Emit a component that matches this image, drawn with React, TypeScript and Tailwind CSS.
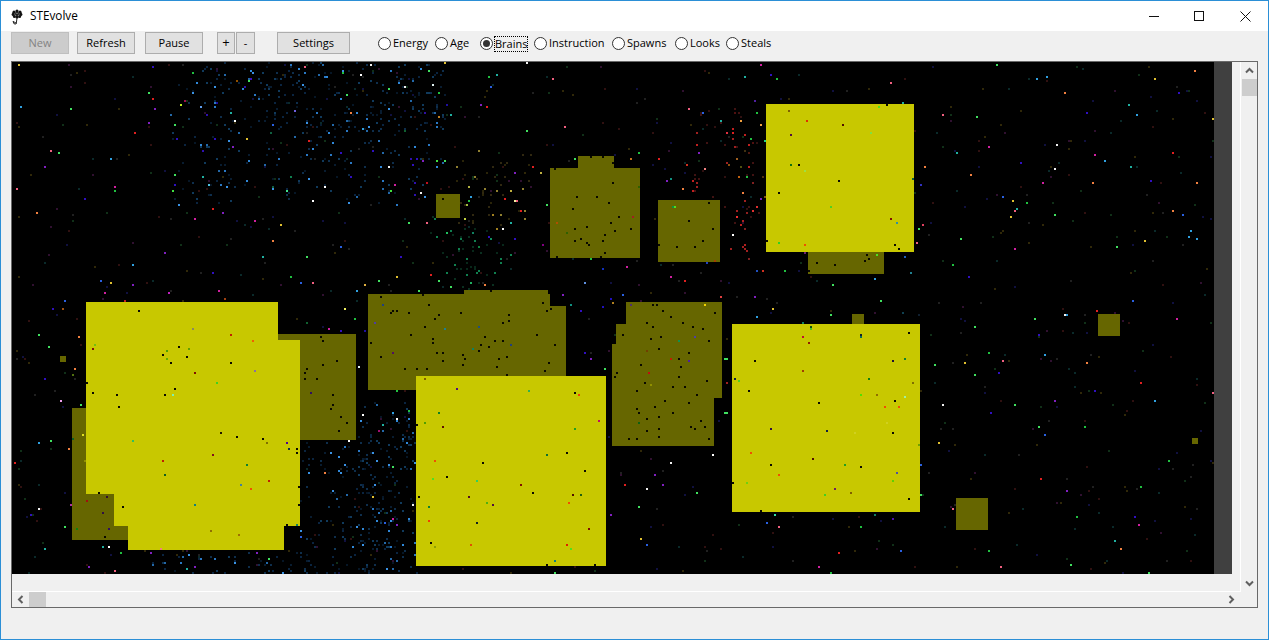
import React from "react";

type Dot = [number, number, string];

const g = (ox: number, oy: number, s: string): Dot[] =>
  s.trim().split(/\s+/).map((t) => {
    const [a, b, c] = t.split(",");
    const x = ox + (Number(a) - 3) / 3;
    const y = oy + (Number(b) - 3) / 3;
    return [Math.round(x / 2) * 2, Math.round(y / 2) * 2, c ? "#" + c : "#0a0a00"] as Dot;
  });

const listed: Dot[] = [
  ...g(60, 290, `237,63 357,171 309,195 381,201 333,219 513,219 81,279 99,309 171,315 315,315 345,297 177,351 483,429,201800 531,441 609,447 711,477 711,489 687,477,103040 117,609 141,621,301030 189,651 129,669,301040 147,717,301060 135,741 717,591 717,645 681,705
    783,141 789,153 831,213 789,225 741,237 735,249 735,267 771,267 819,315 753,309,301060 819,345 813,357 843,381 861,399 837,423
    99,177,801010 399,117,8a8a60 513,135,c02000 579,153,f06000 321,183,50a000 387,177,60a000 321,207,60b000 585,243,8a70a0 405,249,801000 471,279,40d020 339,315,80f0b0 219,453,30c060 309,513,c02000 459,495,801020 315,555,106020 561,525,108030 621,459,807000 681,459,500090 543,585,4080a0 627,573,c02000 573,597,f05000 405,645,108080 453,723,907000 537,735,a07000 81,633,a01010 51,717,108010 711,705,108060 105,165,70c010
    147,771,ffffff 195,33,c02020 135,9,d020a0 327,9,c020c0 855,57,f0f060 63,345,40e060 69,435,e0e020 33,645,b030a0 3,333,f0a0f0 495,27,a04010 9,57,a05010 39,255,507010 915,123,2010a0 741,99,106030 897,231,e0f0f0 867,453,ffffff 909,375,ffffff 303,777,f08080 75,513,909000 39,447,106020`),
  ...g(360, 280, `63,51 207,75 99,93 111,93 93,99 147,99 237,105 303,99 225,117 447,105 447,123 429,129 195,141 153,165 219,177 219,189 33,189 375,171 405,183 429,183 363,195 387,201 357,213 231,219 249,219 309,225 315,237 249,243 63,231 309,255 417,237 441,231 135,267 171,267 201,267 411,261 567,249 555,273 441,285 531,165 585,195 549,69 561,93 573,87 189,45 393,33
    69,75,204080 45,129,5040a0 255,147,208090 357,141,205080 339,207,108060 453,195,204080 99,219,501060
    879,75 891,75 909,93 933,111 1065,99 861,129 969,129 999,141 879,141 1029,147 789,165 873,177 903,171 1047,183 897,207 987,219 957,237 843,255 963,261 771,279 765,291 957,291 855,309 939,321 975,321 831,333 1041,303 1011,345 915,363 987,369 885,381 831,387 837,399 939,399 861,417 897,411 1023,423 993,441 1035,441 1005,447 897,447 861,453 897,471 807,477 831,477 1047,477
    813,75,503070 1035,75,f0d000 957,183,109050 1005,171,5040a0 861,213,704000 933,237,c02000 987,243,5020a0 867,279,c01010 873,315,909000 837,429,106010
    195,297,806000 291,327,501080 507,333,30b050 645,339 657,345,f04000 237,399,108020 195,429,50a000 249,441,601000 717,423,c01060 645,447,20a020 561,525,108030 621,519 171,435
    15,15,e0b040 57,3,40e060 177,33,40e060 273,21,40e060 333,9,20b060 675,9,6090e0 753,57,2010c0 729,81,2010c0 759,69,b08020 633,75,109080 1083,51,e04040 1095,237,40e060 1095,399,40e060 1101,309,a02020 1059,525,ffffff 15,153,2010a0 9,405,ffffff 111,417,ffffff 57,453,a01070`),
  ...g(725, 95, `192,48,806000 246,78,e03000 354,90,501000 198,120,501040 462,36,50e020 486,30 438,114,80e040 198,210,107010 222,210 240,228,a0e040 342,258 162,294 318,336,50d020 498,372,801000 516,384,3090a0 510,450 522,462 162,444,30d020 240,450,f05000 126,438 564,252,106040
    426,480 432,492 420,498 276,504 330,510 252,528 456,480,50e020 240,474,702070
    48,78,f0a040 108,90,f0a040 6,114,e03040 60,120,c02020 120,138,20d080 30,156,a02020 36,192,a06020 12,210,905010 42,246,c06010 84,264,802020 96,336,e03030 84,348,e03030 36,348,a02020 66,354,902020 36,366,f03030 54,378,b02020 60,402,802020 24,420,ffffff 60,450,b02020 54,456,a02020 18,462,a02020 66,468,a02020 72,492,802020 114,528,d03020 96,528,2050c0 90,18,5020a0 588,270,3030c0 594,390,e04060 540,486,2060c0 558,534,208090 48,216,505010 60,168,403010 72,174,501810 84,144,501010 120,306,805010 114,246,503010 60,318,a02020 30,54,501010`),
  ...g(725, 310, `90,153 30,207,102040 72,243 282,279 138,357,301040 306,363,102040 504,369 138,465 264,447,501000 408,471 24,519 108,603 552,567 552,69 504,153,201030 510,273 408,75,102030
    234,81,c01030 252,99,902000 258,57,50c020 258,51,105010 408,81,107050 540,147,108030 234,183,a04000 432,207,108010 42,213,50d020 564,219,807000 408,255,50e000 456,255,907000 540,261,a0f0a0 480,291,f05000 522,291,f05000 486,339,d0d020 390,369,d0d020 78,429,f05000 360,465,20a020 516,489,5050a0 162,495,f05000 66,519,70d010 504,513,60d000 330,537,702060 378,549,806000 300,555,40d020 582,405,70a000
    234,39,108060 318,15,40e060 150,615,30e0a0 450,615,108060 504,627,5010b0 3,147,40e060 3,219,a02020 3,309,40e060 534,9,104050 582,15,102030`),
  ...g(410, 440, `219,69 471,39 525,93 111,111 27,171 369,159 201,249,102020 63,309 411,375 555,375
    411,45,107030 75,63,f05000 69,117,50e020 201,123,30d060 333,135,801000 177,171,501020 489,165,501000 513,165,206010 231,189,50b010 249,195,501040 477,189,f05000 57,201,108030 57,243,f04000 537,267,801000 75,321,90a000 183,315,e05000 471,315,e02000 483,327,50e020 435,363,108080`),
  ...g(430, 150, `39,147 549,39 375,57 549,99 441,141 501,141 537,159 429,177 567,201 543,219 471,231 435,237 603,237 555,243 525,255 453,267 435,273 519,273 471,279 477,285 525,309 381,321 513,321 483,21 519,21 837,159 777,213 849,237 819,273 741,291 795,291 687,285
    381,219,b05000 411,249,306000 609,201,a02020 627,111,306000 735,171,50e020 729,171,109040 855,333,a04000 831,339,2040c0
    225,147,e02020 255,153,f0f0a0 219,237,ffffff 51,249,20c060 21,33,30e060 339,285,800080 687,27,e02020 771,45,d03020 825,57,f08080 723,87,109080 603,27,c07020 333,69,c0b040 117,111,b0b040 243,123,c0b040 105,207,c0d040 111,165,a0c040 189,195,a08020 201,237,a08020 183,267,109060 129,249,108060 147,291,108040 519,357,1030c0`),
  ...g(150, 62, `633,39,ffffff 849,69,e0f0f0 255,177,ffffff 525,375,ffffff 489,417,ffffff 9,111,e02020 93,129,c0f020 105,117,a01050 153,135,60a0f0 435,147,7060e0 303,51,4010c0 261,57,905000 285,75,3010b0 201,123,2010a0 171,159,3010b0 81,231,3010c0 195,231,3010c0 159,267,3010b0 69,387,40e040 177,369,50c0e0 411,387,40e090 423,345,108050 369,375,106040 363,213,106040 861,297,40e040 831,363,c01020 735,369,d020a0 723,387,40e040 795,363,3010b0 795,399,3010b0 603,345,3010c0 669,267,3010c0 783,291,3010b0 825,153,3010a0 891,129,2010a0 867,165,c08020 765,207,106030`),
];

let seed = 48271;
const rnd = () => {
  seed = (seed * 16807) % 2147483647;
  return seed / 2147483647;
};
const pick = (a: string[]) => a[Math.floor(rnd() * a.length)];

const cloud = (n: number, x0: number, x1: number, y0: number, y1: number, bright: string[], dim: string[], p: number): Dot[] => {
  const out: Dot[] = [];
  for (let i = 0; i < n; i++) {
    const x = x0 + rnd() * (x1 - x0);
    const y = y0 + rnd() * (y1 - y0);
    out.push([Math.round(x / 2) * 2, Math.round(y / 2) * 2, rnd() < p ? pick(bright) : pick(dim)]);
  }
  return out;
};

const blue = ["#2a78c4", "#3088d8", "#2368a8", "#3a92e4"];
const blueDim = ["#0a2440", "#081c30", "#0e2e4c", "#061626", "#103a5c"];
const colorful = ["#e02020", "#40e060", "#f0f0f0", "#3010c0", "#3010c0", "#d020a0", "#e0c030", "#20b0a0", "#f08040", "#8020c0", "#30a0e0", "#f06080", "#40e060", "#2a60e0", "#20c040"];
const colorDim = ["#301010", "#103018", "#101040", "#302808", "#301030", "#0a2a2a", "#202020"];

const noise: Dot[] = [
  ...cloud(430, 12, 1214, 62, 574, colorful, colorful, 1),
  ...cloud(900, 12, 1214, 62, 574, colorDim, colorDim, 1),
  ...cloud(300, 170, 445, 62, 205, blue, blueDim, 0.18),
  ...cloud(120, 250, 445, 62, 130, blue, blueDim, 0.14),
  ...cloud(130, 356, 416, 400, 574, blue, blueDim, 0.22),
  ...cloud(170, 300, 420, 440, 574, blue, blueDim, 0.14),
  ...cloud(50, 150, 310, 550, 574, blue, blueDim, 0.2),
  ...cloud(50, 430, 510, 215, 290, ["#108050"], ["#0a3020", "#08281a"], 0.25),
  ...cloud(45, 455, 530, 150, 225, ["#908030"], ["#2a2408", "#302810"], 0.2),
  ...cloud(45, 690, 760, 108, 250, ["#c02020", "#a02020"], ["#301010", "#401212"], 0.3),
];

const bright: number[][] = [
  [86, 302, 278, 494],
  [114, 340, 300, 526],
  [128, 394, 284, 550],
  [766, 104, 914, 252],
  [732, 324, 920, 512],
  [416, 376, 606, 566],
];
const dim: number[][] = [
  [72, 408, 204, 540],
  [250, 334, 356, 440],
  [368, 294, 550, 390],
  [464, 290, 548, 294],
  [396, 306, 566, 376],
  [626, 302, 722, 398],
  [616, 324, 714, 420],
  [612, 344, 714, 446],
  [808, 252, 884, 274],
  [852, 314, 864, 324],
  [550, 168, 640, 258],
  [578, 156, 614, 168],
  [658, 200, 720, 262],
  [436, 194, 460, 218],
  [1098, 314, 1120, 336],
  [1192, 438, 1198, 444],
  [956, 498, 988, 530],
  [60, 356, 66, 362],
];

function Field() {
  return (
    <svg width={1202} height={512} viewBox="12 62 1202 512" shapeRendering="crispEdges" className="block shrink-0 bg-black">
      {noise.map((d, i) => (
        <rect key={i} x={d[0]} y={d[1]} width={2} height={2} fill={d[2]} />
      ))}
      {dim.map((r, i) => (
        <rect key={"d" + i} x={r[0]} y={r[1]} width={r[2] - r[0]} height={r[3] - r[1]} fill="#666600" />
      ))}
      {bright.map((r, i) => (
        <rect key={"b" + i} x={r[0]} y={r[1]} width={r[2] - r[0]} height={r[3] - r[1]} fill="#c8c800" />
      ))}
      {listed.map((d, i) => (
        <rect key={"l" + i} x={d[0]} y={d[1]} width={2} height={2} fill={d[2]} />
      ))}
    </svg>
  );
}

function Chevron({ dir }: { dir: "up" | "down" | "left" | "right" }) {
  const rot = { up: 0, right: 90, down: 180, left: 270 }[dir];
  return (
    <svg width={9} height={9} viewBox="0 0 9 9" style={{ transform: `rotate(${rot}deg)` }}>
      <path d="M1 6.5 L4.5 3 L8 6.5" fill="none" stroke="#606060" strokeWidth={2} />
    </svg>
  );
}

function Btn({ w, children, disabled }: { w: string; children: React.ReactNode; disabled?: boolean }) {
  return (
    <div
      className={
        "h-[22px] flex items-center justify-center border " +
        w +
        (disabled ? " bg-[#cccccc] border-[#bfbfbf] text-[#838383]" : " bg-[#e1e1e1] border-[#adadad] text-black")
      }
    >
      {children}
    </div>
  );
}

function Radio({ w, label, checked }: { w: string; label: string; checked?: boolean }) {
  return (
    <div className={"flex items-center h-[22px] " + w}>
      <div className="w-[13px] h-[13px] mt-[1px] rounded-full border border-[#333333] bg-white flex items-center justify-center shrink-0">
        {checked && <div className="w-[7px] h-[7px] rounded-full bg-[#333333]" />}
      </div>
      <span className={checked ? "ml-[2px] mt-[1px] leading-[14px] outline-1 outline-dotted outline-black" : "ml-[2px] mt-[1px]"}>{label}</span>
    </div>
  );
}

export default function App() {
  return (
    <div className="w-[1269px] h-[640px] overflow-hidden flex flex-col bg-[#f0f0f0] border border-[#2b8fd6] text-[11px] text-black font-['Open_Sans','Noto_Sans',sans-serif]">
      <div className="h-[30px] shrink-0 bg-white flex items-center">
        <svg width={12} height={16} viewBox="0 0 12 16" className="ml-[10px] mt-[1px]">
          <g fill="#111111">
            <circle cx="6" cy="2" r="1.6" />
            <circle cx="6" cy="8" r="1.6" />
            <circle cx="3" cy="3.2" r="1.6" />
            <circle cx="9" cy="3.2" r="1.6" />
            <circle cx="2.2" cy="5.4" r="1.6" />
            <circle cx="9.8" cy="5.4" r="1.6" />
            <circle cx="3.4" cy="7.4" r="1.5" />
            <circle cx="8.6" cy="7.4" r="1.5" />
            <circle cx="6" cy="5" r="2" />
          </g>
          <circle cx="6" cy="4.6" r="0.7" fill="#bbbbbb" />
          <path d="M6 9 L5.2 15 M5 14 L2 12.4 L3 14.8 L5 15" stroke="#222222" strokeWidth="1" fill="none" />
        </svg>
        <span className="ml-[7px] text-[11.75px]">STEvolve</span>
        <div className="ml-auto flex h-full">
          <div className="w-[45px] flex items-center justify-center">
            <svg width={10} height={10} viewBox="0 0 10 10" shapeRendering="crispEdges"><path d="M0 5.5 H10" stroke="#111111" /></svg>
          </div>
          <div className="w-[46px] flex items-center justify-center">
            <svg width={10} height={10} viewBox="0 0 10 10" shapeRendering="crispEdges"><rect x="0.5" y="0.5" width="9" height="9" fill="none" stroke="#111111" /></svg>
          </div>
          <div className="w-[46px] flex items-center justify-center">
            <svg width={11} height={11} viewBox="0 0 11 11"><path d="M0.5 0.5 L10.5 10.5 M10.5 0.5 L0.5 10.5" stroke="#111111" /></svg>
          </div>
        </div>
      </div>

      <div className="h-[30px] shrink-0 flex items-start pt-[1px] pl-[10px]">
        <Btn w="w-[58px]" disabled>New</Btn>
        <div className="ml-[8px]"><Btn w="w-[58px]">Refresh</Btn></div>
        <div className="ml-[10px]"><Btn w="w-[58px]">Pause</Btn></div>
        <div className="ml-[14px]"><Btn w="w-[18px]"><span className="text-[13px]">+</span></Btn></div>
        <div className="ml-[1px]"><Btn w="w-[19px]">-</Btn></div>
        <div className="ml-[22px]"><Btn w="w-[73px]">Settings</Btn></div>
        <div className="ml-[28px] flex">
          <Radio w="w-[57px]" label="Energy" />
          <Radio w="w-[45px]" label="Age" />
          <Radio w="w-[54px]" label="Brains" checked />
          <Radio w="w-[78px]" label="Instruction" />
          <Radio w="w-[63px]" label="Spawns" />
          <Radio w="w-[51px]" label="Looks" />
          <Radio w="w-[50px]" label="Steals" />
        </div>
      </div>

      <div className="ml-[10px] w-[1247px] h-[547px] shrink-0 border border-[#696969] flex flex-col">
        <div className="flex h-[530px] shrink-0">
          <div className="w-[1228px] flex flex-col border-b border-white h-[530px]">
            <div className="flex h-[512px] shrink-0">
              <Field />
              <div className="w-[18px] bg-[#404040]" />
            </div>
          </div>
          <div className="w-[1px] h-[530px] bg-white" />
          <div className="w-[16px] flex flex-col items-center">
            <div className="h-[17px] flex items-center justify-center"><Chevron dir="up" /></div>
            <div className="w-[15px] h-[17px] bg-[#cdcdcd]" />
            <div className="mt-auto h-[17px] flex items-center justify-center"><Chevron dir="down" /></div>
          </div>
        </div>
        <div className="flex-1 flex items-center">
          <div className="w-[17px] flex justify-center"><Chevron dir="left" /></div>
          <div className="w-[17px] h-[15px] bg-[#cdcdcd]" />
          <div className="ml-auto w-[17px] mr-[17px] flex justify-center"><Chevron dir="right" /></div>
        </div>
      </div>
    </div>
  );
}
